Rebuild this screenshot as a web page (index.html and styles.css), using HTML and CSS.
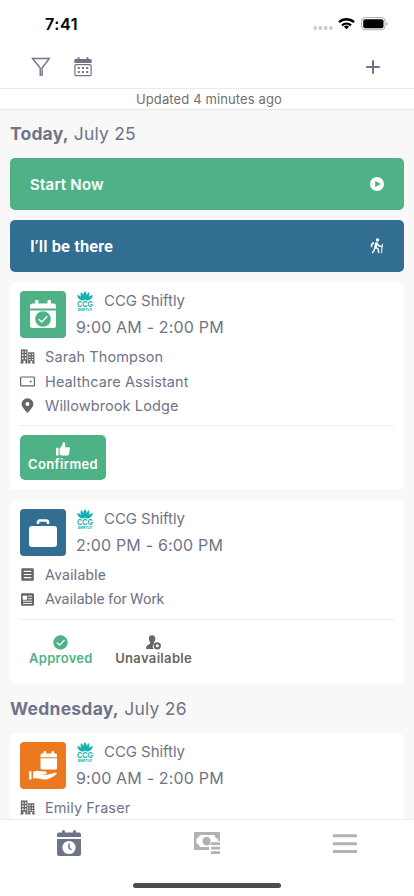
FILE: index.html
```html
<!DOCTYPE html>
<html lang="en">
<head>
<meta charset="utf-8">
<title>Shifts</title>
<link rel="stylesheet" href="styles.css">
</head>
<body>
<svg width="0" height="0" class="defs">
  <defs>
    <symbol id="ccg" viewBox="0 0 16 20">
      <g fill="#14b3b0">
        <path d="M8 0.200C10.200 2 10.500 6 8 9.400C5.500 6 5.800 2 8 .2zM4.200 .9C6.100 2.500 6.900 5.500 7.300 9.400C4.200 7.700 2.700 4 4.200 .9zM11.800 .9C13.300 4 11.800 7.700 8.700 9.400C9.100 5.500 9.900 2.500 11.800 .9zM.3 3.900C2.900 4.300 5.200 6.200 6.800 9.400C3 9.500.5 7.500.3 3.900zM15.700 3.900C15.500 7.500 13 9.500 9.200 9.400C10.800 6.200 13.100 4.300 15.700 3.900z"/>
        <text x=".1" y="16" font-size="8.200" font-weight="700" textLength="15.700" lengthAdjust="spacingAndGlyphs">CCG</text>
        <text x=".7" y="19.700" font-size="3.900" font-weight="800" textLength="14.500" lengthAdjust="spacingAndGlyphs">SHIFTLY</text>
      </g>
    </symbol>
    <symbol id="building" viewBox="0 0 14 14">
      <path fill="#666" fill-rule="evenodd" d="M.8.500H7V13.500H5V11H3.200V13.500H.3V12.700H.8zM2 2V3.500H3.300V2zM4.600 2V3.500H5.900V2zM2 5V6.500H3.300V5zM4.600 5V6.500H5.900V5zM2 8V9.500H3.300V8zM4.600 8V9.500H5.900V8zM7.600 3H13.400V12.700H14V13.500H11.400V11.300H9.700V13.500H7.600zM8.700 4.500V5.700H9.900V4.500zM11.100 4.500V5.700H12.300V4.500zM8.700 7V8.200H9.900V7zM11.100 7V8.200H12.300V7zM8.700 9.400V10.400H9.900V9.400zM11.100 9.400V10.400H12.300V9.400z"/>
    </symbol>
  </defs>
</svg>
<div class="screen">
  <header class="top">
    <div class="status">
      <span class="clock">7:41</span>
      <svg width="76" height="14" viewBox="0 0 76 14">
        <g fill="#ccc"><circle cx="2.200" cy="11" r="1.900"/><circle cx="7.400" cy="11" r="1.900"/><circle cx="12.600" cy="11" r="1.900"/><circle cx="17.800" cy="11" r="1.900"/></g>
        <g fill="none" stroke="#000" stroke-width="2.300"><path d="M26 5.200a11 11 0 0 1 15 0M29 8.300a6.800 6.800 0 0 1 9 0"/></g>
        <path d="M33.500 12.300L30.900 9.800a3.800 3.800 0 0 1 5.200 0z"/>
        <rect x="48.600" y=".6" width="23.500" height="12.200" rx="3.600" fill="#fff" stroke="#aaa"/>
        <rect x="50.200" y="2.200" width="20.300" height="9" rx="2"/>
        <path d="M73.500 4.800c1.700.7 1.700 3.200 0 4z" fill="#aaa"/>
      </svg>
    </div>
    <div class="tools">
      <svg width="20" height="20" viewBox="0 0 20 20"><path d="M1.500 1.500H18.300L11.100 11V18H9.200V11z" fill="none" stroke="#707488" stroke-width="1.400"/></svg>
      <svg class="cal" width="18" height="20" viewBox="0 0 18 20"><g fill="#707488"><path d="M.3 6V3.200Q.3 1.900 1.600 1.900H3.500V.3H5.500V1.900H12.500V.3H14.500V1.900H16.400Q17.700 1.900 17.700 3.200V6z"/><path d="M3.800 10h2v1.900h-2zM8 10h2v1.900H8zM12.200 10h2v1.900h-2zM3.800 14h2v1.900h-2zM8 14h2v1.900H8zM12.200 14h2v1.900h-2z"/></g><rect x=".9" y="7.700" width="16.200" height="11" rx="1" fill="none" stroke="#707488" stroke-width="1.200"/></svg>
      <svg class="plus" width="14" height="14" viewBox="0 0 14 14"><path d="M7 .2V13.800M.2 7H13.800" stroke="#707488" stroke-width="2"/></svg>
    </div>
  </header>
  <div class="updated"><span>Updated 4 minutes ago</span></div>

  <main class="feed">
    <h2 class="day today"><b>Today,</b> July 25</h2>
    <div class="action start"><span>Start Now</span>
      <svg width="14" height="14" viewBox="0 0 14 14"><circle cx="7" cy="7" r="7" fill="#fff"/><path d="M5.200 3.900V10.100L11 7z" fill="#4fb286"/></svg>
    </div>
    <div class="action going"><span>I’ll be there</span>
      <svg width="14" height="16" viewBox="0 0 14 16"><circle cx="7.500" cy="2" r="1.700" fill="#fff"/><g fill="none" stroke="#fff" stroke-linecap="round" stroke-linejoin="round"><path d="M6.300 5.500L5.500 9.200" stroke-width="2.600"/><path d="M7.300 5.300L8.400 7.700L11.600 8.400M5.700 9.300L8.200 11L8.700 14.600M4.700 10.200L4.200 12.300L2.600 14.600" stroke-width="1.500"/><path d="M3.400 4.900Q1.500 5.500 1.500 8.500" stroke-width="1.600"/><path d="M12.400 6.200L11.500 14.800" stroke-width="1"/></g></svg>
    </div>

    <section class="card first">
      <div class="head">
        <div class="tile green"><svg width="26" height="30" viewBox="0 0 26 30"><path fill="#fff" d="M0 8.500V6Q0 3.500 2.500 3.500H5V1.500A1.500 1.500 0 0 1 8.500 1.500V3.500H17.500V1.500A1.500 1.500 0 0 1 21 1.500V3.500H23.500Q26 3.500 26 6V8.500zM0 10.500H26V25.500Q26 28 23.500 28H2.500Q0 28 0 25.500z"/><circle cx="13" cy="19" r="7.800" fill="#4fb286"/><path d="M8.700 19.200L11.800 22L17.300 16.200" fill="none" stroke="#fff" stroke-width="1.400"/></svg></div>
        <div class="title">
          <div class="brand"><svg width="16" height="20"><use href="#ccg"/></svg><span>CCG Shiftly</span></div>
          <div class="time">9:00 AM - 2:00 PM</div>
        </div>
      </div>
      <ul class="facts">
        <li><svg width="15" height="15"><use href="#building"/></svg><span>Sarah Thompson</span></li>
        <li><svg width="15" height="15" viewBox="0 0 15 15"><rect x=".6" y="3" width="13.800" height="8.800" rx=".6" fill="none" stroke="#666" stroke-width="1.200"/><circle cx="10.700" cy="7.400" r="1" fill="#666"/></svg><span>Healthcare Assistant</span></li>
        <li><svg width="15" height="15" viewBox="0 0 15 15"><path d="M7.500.2A5.900 5.900 0 0 0 1.600 6C1.600 9.500 7.500 14.900 7.500 14.900S13.400 9.500 13.400 6A5.900 5.900 0 0 0 7.500.2zM7.500 3.900a2 2 0 1 1 0 4 2 2 0 0 1 0-4z" fill="#666"/></svg><span>Willowbrook Lodge</span></li>
      </ul>
      <div class="choices">
        <div class="confirmed"><svg width="14" height="14" viewBox="0 0 14 14"><path fill="#fff" d="M0 5.800H2.500V13.500H0zM3.600 6.200Q6.700 4 6.700 1Q6.700.2 7.600.2Q9.300.2 9.300 2.300Q9.300 3.800 8.800 5.200H12.500Q14 5.200 13.900 6.600L13 12Q12.700 13.500 11.200 13.500H5.600Q3.600 13.200 3.600 12z"/></svg><span>Confirmed</span></div>
      </div>
    </section>

    <section class="card second">
      <div class="head">
        <div class="tile blue"><svg width="30" height="30" viewBox="0 0 30 30"><rect x="1" y="8" width="28" height="21" rx="3" fill="#fff"/><path d="M10 6V4.300Q10 2.600 11.700 2.600H18.300Q20 2.600 20 4.300V6" fill="none" stroke="#fff" stroke-width="2.500"/></svg></div>
        <div class="title">
          <div class="brand"><svg width="16" height="20"><use href="#ccg"/></svg><span>CCG Shiftly</span></div>
          <div class="time">2:00 PM - 6:00 PM</div>
        </div>
      </div>
      <ul class="facts status-facts">
        <li><svg width="15" height="15" viewBox="0 0 15 15"><rect x="1.300" y="1.200" width="12.500" height="12.600" rx="1.300" fill="#666"/><path d="M3.800 4.300h7.500M3.800 7.500h7.500M3.800 10.700h7.500" stroke="#fff" stroke-width="1.200"/></svg><span>Available</span></li>
        <li><svg width="15" height="15" viewBox="0 0 15 15"><rect x="1" y="1.200" width="13" height="12.600" rx="1.300" fill="#666"/><path d="M3 4h3.700v3.300H3zM8 4.100h4M8 6.700h4M3 9.200h9M3 11.500h9" fill="#fff" stroke="#fff" stroke-width=".9"/></svg><span class="work">Available for Work</span></li>
      </ul>
      <div class="choices plain">
        <div class="choice approved"><svg width="15" height="15" viewBox="0 0 15 15"><circle cx="7.500" cy="7.500" r="7.200" fill="#4fb286"/><path d="M3.800 7.500L6.600 10.200L11.600 5" fill="none" stroke="#fff" stroke-width="1.200"/></svg><span>Approved</span></div>
        <div class="choice unavailable"><svg width="15" height="15" viewBox="0 0 15 15"><path fill="#666" d="M6 .2C8.600.2 9.500 2 9.300 4C9.100 5.800 8.200 6.500 8 7.600L8.200 8.700A4 4 0 0 0 7.600 14H.2V12.300C.2 10.500 3.700 9.500 4.200 8.600C4.300 7 3.100 6.200 2.900 4C2.700 1.800 3.800.2 6 .2z"/><circle cx="11.300" cy="10.800" r="2.600" fill="none" stroke="#666" stroke-width="2.100"/></svg><span>Unavailable</span></div>
      </div>
    </section>

    <h2 class="day wed"><b>Wednesday,</b> July 26</h2>
    <section class="card third">
      <div class="head">
        <div class="tile orange"><svg width="30" height="30" viewBox="0 0 30 30"><path fill="#fff" d="M12.500 6.200V4Q12.500 2.600 14 2.600H15.500V1.200A1.300 1.300 0 0 1 18.100 1.200V2.600H23.500V1.200A1.300 1.300 0 0 1 26.100 1.200V2.600H27.500Q29 2.600 29 4V6.200zM12.500 7.300H29V17Q29 18.500 27.500 18.500H14Q12.500 18.500 12.500 17zM1 20.200H3.500V28.500H1zM5 21Q8 19.200 11 19.900L17.500 20.600Q19.500 21.200 18.300 22.700L13.500 23.300L19.500 23.800L26.700 21.700Q29.500 21.400 28.500 23.200Q25 26.400 19.500 28.300Q17 29 12 27.700Q8 26.800 5 27.500z"/></svg></div>
        <div class="title">
          <div class="brand"><svg width="16" height="20"><use href="#ccg"/></svg><span>CCG Shiftly</span></div>
          <div class="time">9:00 AM - 2:00 PM</div>
        </div>
      </div>
      <ul class="facts">
        <li><svg width="15" height="15"><use href="#building"/></svg><span>Emily Fraser</span></li>
      </ul>
    </section>
  </main>

  <nav class="tabs">
    <div class="tab-row">
      <svg width="24" height="27" viewBox="0 0 24 27"><path fill="#707488" d="M0 7V4.500Q0 2.500 2 2.500H5V1.500A1.500 1.500 0 0 1 8 1.500V2.500H16V1.500A1.500 1.500 0 0 1 19 1.500V2.500H22Q24 2.500 24 4.500V7zM0 9H24V24Q24 26 22 26H2Q0 26 0 24z"/><circle cx="12" cy="17.500" r="6.600" fill="#fff"/><path d="M12 13.500V18L14.500 20" fill="none" stroke="#707488" stroke-width="1.500"/></svg>
      <svg width="26" height="23" viewBox="0 0 26 23"><path fill="#b2b2b2" fill-rule="evenodd" d="M0 0H26V9H24V7Q21 6.500 20.500 3H6Q5.500 6 2.500 6.800V11.500Q5.500 12.300 6 15H15V18H0zM12.700 4.800A4.300 4.300 0 0 1 16.400 10.600V12.500Q14.700 13.400 12.700 13.400A4.300 4.300 0 0 1 12.700 4.800zM17 10.200H26V13H17zM17 14.700H26V17.500H17zM17 19.200H26V22H17z"/></svg>
      <svg width="24" height="20" viewBox="0 0 24 20"><path d="M0 1.800H24M0 9.700H24M0 17.600H24" stroke="#b2b2b2" stroke-width="3"/></svg>
    </div>
    <div class="home"></div>
  </nav>
</div>
</body>
</html>
```

FILE: styles.css
```css
* { box-sizing: border-box; }
body { margin: 0; font-family: Inter, "Liberation Sans", sans-serif; color: #707488; background: #f8f8f8; }
svg { display: block; flex: none; }
.defs { position: absolute; }
.screen { width: 414px; height: 896px; display: flex; flex-direction: column; overflow: hidden; }
.top { height: 89px; flex: none; background: #fff; border-bottom: 1px solid #e9e9ea; }
.status { height: 48px; display: flex; align-items: center; justify-content: space-between; padding: 0 25px 0 45px; }
.clock { color: #000; font-size: 16.2px; font-weight: 600; letter-spacing: .5px; }
.tools { display: flex; align-items: center; height: 38px; padding: 0 34px 0 31px; }
.cal { margin-left: 23px; }
.plus { margin-left: auto; }
.updated { height: 21px; flex: none; background: #fff; border-bottom: 1px solid #e5e5e6; display: flex; justify-content: center; align-items: center; color: #707070; font-size: 13px; letter-spacing: .12px; padding-left: 4px; white-space: nowrap; }
.feed { flex: 1; min-height: 0; overflow: hidden; padding: 0 10px; }
.day { margin: 0; height: 48px; line-height: 47px; font-size: 17.5px; font-weight: 400; letter-spacing: .25px; white-space: nowrap; }
.today { letter-spacing: .18px; }
.wed { height: 49px; line-height: 49px; }
.day b { font-weight: 700; }
.action { height: 52px; border-radius: 5px; margin-bottom: 10px; padding: 0 20px; display: flex; align-items: center; justify-content: space-between; color: #fff; font-size: 15px; font-weight: 600; }
.start { background: #4fb286; letter-spacing: .22px; }
.going { background: #326e91; font-family: Roboto, sans-serif; font-size: 16.5px; letter-spacing: .1px; }
.card { background: #fff; border-radius: 5px; padding: 9px 10px 0; margin-bottom: 10px; }
.first { height: 208px; }
.second { height: 184px; margin-bottom: 0; }
.third { height: 184px; }
.head { display: flex; height: 47px; }
.tile { width: 46px; height: 47px; border-radius: 4px; display: flex; align-items: center; justify-content: center; }
.green { background: #4fb286; }
.blue { background: #326e91; }
.orange { background: #ec7820; }
.title { padding-left: 10px; white-space: nowrap; }
.brand { display: flex; align-items: center; height: 19px; gap: 11px; padding-left: 1px; font-size: 15px; letter-spacing: -.05px; }
.time { font-size: 16px; line-height: 20px; margin-top: 7px; letter-spacing: .18px; }
.facts { list-style: none; margin: 0; padding: 6.5px 0 0; }
.facts li { display: flex; align-items: center; gap: 10px; height: 24.4px; font-size: 14.5px; letter-spacing: .1px; white-space: nowrap; }
.status-facts li { font-family: Roboto, sans-serif; font-size: 15px; letter-spacing: .05px; }
.status-facts .work { letter-spacing: -.1px; }
.choices { border-top: 1px solid #eee; margin-top: 7.5px; padding-top: 9px; }
.confirmed { width: 86px; height: 45px; border-radius: 5px; background: #4fb286; color: #fff; display: flex; flex-direction: column; align-items: center; padding-top: 7px; font-size: 13px; line-height: 16px; font-weight: 600; letter-spacing: .35px; }
.plain { display: flex; gap: 22.5px; padding: 15px 0 0 9px; }
.choice { display: flex; flex-direction: column; align-items: center; font-size: 13px; line-height: 16px; font-weight: 600; white-space: nowrap; }
.approved { color: #4fb286; letter-spacing: .28px; }
.unavailable { color: #666; letter-spacing: .34px; }
.tabs { height: 77px; flex: none; background: #fff; border-top: 1px solid #ececec; }
.tab-row { height: 46px; padding: 1px 57px 0; display: flex; align-items: center; justify-content: space-between; }
.home { width: 148px; height: 5px; margin: 17px auto 0; border-radius: 3px; background: #4c4c4c; }
```
